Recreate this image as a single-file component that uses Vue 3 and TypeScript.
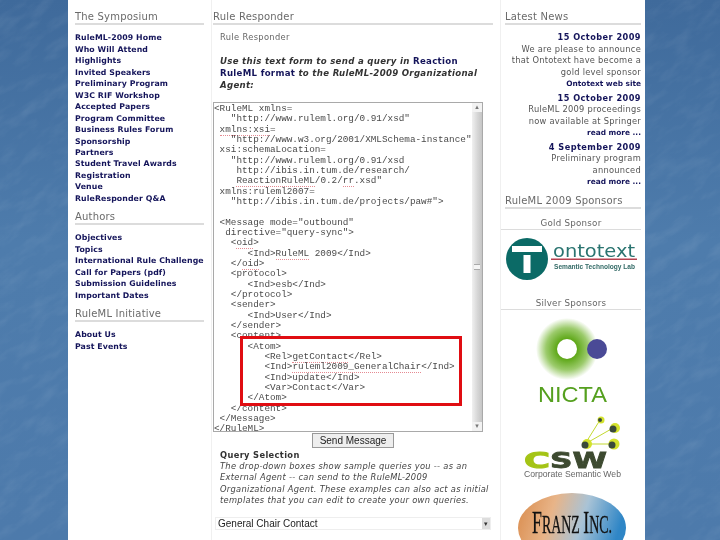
<script setup lang="ts">
interface NewsItem { date: string; lines: string[]; link: string }
interface Seg { t: string; err?: boolean }
const symposium: string[] = ['RuleML-2009 Home','Who Will Attend','Highlights','Invited Speakers','Preliminary Program','W3C RIF Workshop','Accepted Papers','Program Committee','Business Rules Forum','Sponsorship','Partners','Student Travel Awards','Registration','Venue','RuleResponder Q&A']
const authors: string[] = ['Objectives','Topics','International Rule Challenge','Call for Papers (pdf)','Submission Guidelines','Important Dates']
const initiative: string[] = ['About Us','Past Events']
const news: NewsItem[] = [
  { date: '15 October 2009', lines: ['We are please to announce','that Ontotext have become a','gold level sponsor'], link: 'Ontotext web site' },
  { date: '15 October 2009', lines: ['RuleML 2009 proceedings','now available at Springer'], link: 'read more ...' },
  { date: '4 September 2009', lines: ['Preliminary program','announced'], link: 'read more ...' }
]
const xml: Seg[] = [
  { t: `<RuleML xmlns=
   "http://www.ruleml.org/0.91/xsd"
 ` },
  { t: 'xmlns:xsi', err: true },
  { t: `=
   "http://www.w3.org/2001/XMLSchema-instance"
 xsi:schemaLocation=
   "http://www.ruleml.org/0.91/xsd
    http://ibis.in.tum.de/research/
    ` },
  { t: 'ReactionRuleML', err: true },
  { t: '/0.2/' },
  { t: 'rr', err: true },
  { t: `.xsd"
 xmlns:ruleml2007=
   "http://ibis.in.tum.de/projects/paw#">

 <Message mode="outbound"
  directive="query-sync">
   <` },
  { t: 'oid', err: true },
  { t: `>
      <Ind>` },
  { t: 'RuleML', err: true },
  { t: ` 2009</Ind>
   </` },
  { t: 'oid', err: true },
  { t: `>
   <protocol>
      <Ind>esb</Ind>
   </protocol>
   <sender>
      <Ind>User</Ind>
   </sender>
   <content>
      <Atom>
         <Rel>` },
  { t: 'getContact', err: true },
  { t: `</Rel>
         <Ind>` },
  { t: 'ruleml2009_GeneralChair', err: true },
  { t: `</Ind>
         <Ind>update</Ind>
         <Var>Contact</Var>
      </Atom>
   </content>
 </Message>
</RuleML>` }
]
</script>

<template>
  <div class="slide">
    <svg class="texture" width="720" height="540" aria-hidden="true">
      <filter id="sky" x="0" y="0" width="100%" height="100%">
        <feTurbulence type="fractalNoise" baseFrequency="0.035 0.09" numOctaves="4" seed="7" />
        <feColorMatrix type="matrix" values="0 0 0 0 1  0 0 0 0 1  0 0 0 0 1  1.1 0 0 0 -0.48" />
      </filter>
      <g transform="rotate(-35 360 270)">
        <rect x="-300" y="-300" width="1320" height="1140" filter="url(#sky)" opacity="0.14" />
      </g>
    </svg>

    <main class="page">
      <aside class="left">
        <h2 class="title">The Symposium</h2>
        <ul class="links">
          <li v-for="item in symposium" :key="item">{{ item }}</li>
        </ul>
        <h2 class="title">Authors</h2>
        <ul class="links">
          <li v-for="item in authors" :key="item">{{ item }}</li>
        </ul>
        <h2 class="title">RuleML Initiative</h2>
        <ul class="links">
          <li v-for="item in initiative" :key="item">{{ item }}</li>
        </ul>
      </aside>

      <section class="middle">
        <h2 class="title">Rule Responder</h2>
        <div class="inner">
          <p class="crumb">Rule Responder</p>
          <p class="intro">Use this text form to send a query in <b>Reaction RuleML format</b> to the <span>RuleML-2009 Organizational</span> Agent:</p>
        </div>
        <div class="textarea">
          <pre class="code"><template v-for="(s, i) in xml" :key="i"><span v-if="s.err" class="err">{{ s.t }}</span><template v-else>{{ s.t }}</template></template></pre>
          <div class="scrollbar">
            <span class="arrow">▴</span>
            <span class="thumb"><i class="grip"></i></span>
            <span class="arrow">▾</span>
          </div>
          <div class="highlight"></div>
        </div>
        <div class="send"><button type="button">Send Message</button></div>
        <div class="inner">
          <h3 class="query">Query Selection</h3>
          <p class="help">The drop-down boxes show sample queries you -- as an External Agent -- can send to the RuleML-2009 Organizational Agent. These examples can also act as initial templates that you can edit to create your own queries.</p>
        </div>
        <div class="select">
          <span>General Chair Contact</span>
          <span class="drop">▾</span>
        </div>
      </section>

      <aside class="right">
        <h2 class="title">Latest News</h2>
        <div v-for="(n, i) in news" :key="i" class="news">
          <div class="date">{{ n.date }}</div>
          <div v-for="l in n.lines" :key="l" class="line">{{ l }}</div>
          <div class="more">{{ n.link }}</div>
        </div>
        <h2 class="title sponsors">RuleML 2009 Sponsors</h2>
        <h3 class="tier gold">Gold Sponsor</h3>
        <svg class="logo ontotext" width="140" height="46" viewBox="0 0 140 46">
          <circle cx="26" cy="23" r="21" fill="#0b6a66" />
          <rect x="11" y="10" width="30" height="6" fill="#fff" />
          <rect x="22.500" y="19" width="7" height="18" fill="#fff" />
          <text x="52" y="20.500" class="onto" textLength="82" lengthAdjust="spacingAndGlyphs">ontotext</text>
          <rect x="50" y="22.500" width="86" height="1.500" fill="#b5404f" />
          <text x="53" y="32.500" class="lab" textLength="81" lengthAdjust="spacingAndGlyphs">Semantic Technology Lab</text>
        </svg>
        <h3 class="tier silver">Silver Sponsors</h3>
        <svg class="logo" width="140" height="102" viewBox="0 0 140 102">
          <defs>
            <radialGradient id="glow">
              <stop offset="0.3" stop-color="#5aa512" />
              <stop offset="0.68" stop-color="#9ccb6c" />
              <stop offset="1" stop-color="#fff" />
            </radialGradient>
          </defs>
          <circle cx="66" cy="39" r="31" fill="url(#glow)" />
          <circle cx="66" cy="39" r="10" fill="#fff" />
          <circle cx="96" cy="39" r="10" fill="#4a4a96" />
          <text x="37" y="92" class="nicta" textLength="69" lengthAdjust="spacingAndGlyphs">NICTA</text>
        </svg>
        <svg class="logo csw" width="140" height="80" viewBox="0 0 140 80">
          <g stroke="#c3d92f" stroke-width="1" fill="none">
            <path d="M84 32 L99 8 M84 32 L112 16 M84 32 L111 32" />
          </g>
          <g fill="#d3e22c">
            <circle cx="86" cy="32" r="5" /><circle cx="114" cy="16" r="5" /><circle cx="113" cy="32" r="5.500" /><circle cx="100" cy="8" r="3.500" />
          </g>
          <g fill="#3a4a3a">
            <circle cx="84" cy="33" r="3.500" /><circle cx="112" cy="17" r="3.500" /><circle cx="111" cy="33" r="3.500" /><circle cx="99" cy="8" r="2" />
          </g>
          <text x="23" y="56" class="cswc" textLength="26" lengthAdjust="spacingAndGlyphs">C</text>
          <text x="49" y="56" class="csws" textLength="57" lengthAdjust="spacingAndGlyphs">SW</text>
          <text x="23" y="65" class="cswt" textLength="97" lengthAdjust="spacingAndGlyphs">Corporate Semantic Web</text>
        </svg>
        <svg class="logo franz" width="140" height="60" viewBox="0 0 140 60">
          <defs>
            <linearGradient id="globe" x1="0" x2="1" y1="0" y2="0.2">
              <stop offset="0" stop-color="#d98a4a" />
              <stop offset="0.35" stop-color="#e8b488" />
              <stop offset="0.65" stop-color="#a9c3d6" />
              <stop offset="1" stop-color="#2f86c6" />
            </linearGradient>
          </defs>
          <ellipse cx="71" cy="36" rx="54" ry="35" fill="url(#globe)" />
          <text x="31" y="41" class="fr" textLength="80" lengthAdjust="spacingAndGlyphs">F<tspan class="fr-s">RANZ </tspan>I<tspan class="fr-s">NC.</tspan></text>
        </svg>
      </aside>
    </main>
  </div>
</template>

<style>
html, body { margin: 0; height: 100%; overflow: hidden; }
</style>

<style scoped>
.slide {
  position: relative;
  width: 720px;
  height: 540px;
  overflow: hidden;
  background: linear-gradient(180deg, #3f6a9b 0%, #4e7cac 45%, #4d7aab 100%);
}
.texture { position: absolute; inset: 0; }
.page {
  position: relative;
  margin-left: 68px;
  width: 577px;
  height: 540px;
  overflow: hidden;
  background: #fff;
  display: grid;
  grid-template-columns: 144px 289px 144px;
  font-family: "DejaVu Sans", sans-serif;
  filter: blur(0.35px);
}
.title {
  margin: 0;
  font-size: 10px;
  line-height: 12px;
  font-weight: 400;
  color: #6a6a6a;
  letter-spacing: 0.2px;
  border-bottom: 2.5px solid #dcdcdc;
}
.left { padding: 11px 7px 0 7px; border-right: 1px solid #f0f0f0; }
.links { list-style: none; margin: 7.300px 0 6.700px; padding: 0; }
.links li {
  font-size: 7.8px;
  line-height: 11.47px;
  font-weight: 700;
  letter-spacing: 0.1px;
  color: #14145a;
  white-space: nowrap;
}
.middle { padding: 11px 7px 0 1px; border-right: 1px solid #f0f0f0; box-sizing: border-box; }
.inner { padding-left: 7px; }
.crumb { margin: 7px 0 0; font-size: 8.3px; line-height: 11px; color: #666; letter-spacing: 0.35px; }
.intro { margin: 12px 0 0; font-size: 8.6px; line-height: 12px; font-weight: 700; font-style: italic; color: #333; letter-spacing: 0.3px; width: 262px; }
.intro b { font-style: normal; color: #14145a; }
.textarea {
  position: relative;
  width: 270px;
  height: 330px;
  margin-top: 11px;
  box-sizing: border-box;
  border: 1px solid #a9a9a9;
  background: #fff;
  display: flex;
  overflow: hidden;
}
.code {
  flex: 1;
  margin: 0;
  padding: 1px 0 0 0;
  font-family: "Liberation Mono", monospace;
  font-size: 9.33px;
  line-height: 10.33px;
  color: #4a4a4a;
  overflow: hidden;
}
.err { border-bottom: 1px dotted #e58a92; }
.scrollbar {
  width: 10px;
  background: linear-gradient(90deg, #f0f0f0 0%, #d4d4d4 60%, #c6c6c6 100%);
  display: flex;
  flex-direction: column;
  align-items: center;
}
.arrow { width: 10px; height: 9px; background: #f2f2f2; color: #777; font-size: 7px; line-height: 9px; text-align: center; }
.thumb { flex: 1; width: 10px; display: flex; justify-content: center; align-items: center; }
.grip { width: 6px; height: 4px; background: #f4f4f4; border-top: 1px solid #aaa; border-bottom: 1px solid #aaa; }
.highlight {
  position: absolute;
  left: 26px;
  top: 233px;
  width: 216px;
  height: 64px;
  border: 3.5px solid #e00d12;
}
.send { display: flex; justify-content: flex-start; padding-left: 99px; height: 16px; margin-top: 1px; }
.send button {
  width: 82px;
  height: 15px;
  padding: 0;
  border: 1px solid #999;
  background: #eeeeee;
  font-family: "Liberation Sans", sans-serif;
  font-size: 10px;
  line-height: 13px;
  color: #222;
}
.query { margin: 1px 0 0; font-size: 8.3px; line-height: 11px; font-weight: 700; letter-spacing: 0.35px; color: #333; }
.help { margin: 0; font-size: 8.3px; line-height: 11.4px; font-style: italic; letter-spacing: 0.3px; color: #444; width: 272px; }
.select {
  margin: 10px 0 0 2px;
  width: 276px;
  height: 13px;
  box-sizing: border-box;
  border: 1px solid #eee;
  display: flex;
  justify-content: space-between;
  align-items: center;
  padding-left: 2px;
  font-family: "Liberation Sans", sans-serif;
  font-size: 10px;
  color: #222;
}
.drop { width: 8px; height: 11px; background: #ddd; font-size: 7px; line-height: 11px; text-align: center; color: #333; }
.right { padding: 11px 4px 0 0; }
.right > .title { margin-left: 4px; }
.news { text-align: right; }
.news:first-of-type { margin-top: 7px; }
.date { font-size: 8.2px; line-height: 11.5px; font-weight: 700; letter-spacing: 0.45px; color: #14145a; }
.line { font-size: 8.3px; line-height: 11.5px; color: #555; letter-spacing: 0.25px; white-space: nowrap; }
.more { font-size: 7.4px; line-height: 12px; font-weight: 700; color: #14145a; margin-bottom: 2.500px; }
.right > .sponsors { margin-top: 7px; border-bottom-width: 2px; }
.tier {
  margin: 9px 0 0;
  font-size: 8.7px;
  line-height: 11px;
  font-weight: 400;
  color: #666;
  text-align: center;
  letter-spacing: 0.25px;
  border-bottom: 1.500px solid #dcdcdc;
}
.logo { display: block; }
.ontotext { margin-top: 6px; }
.tier.silver { margin-top: 15.500px; }
.onto { font-family: "DejaVu Sans", sans-serif; font-size: 17px; fill: #2a7470; }
.lab { font-family: "Liberation Sans", sans-serif; font-size: 7px; fill: #336a66; font-weight: 700; }
.nicta { font-family: "Liberation Sans", sans-serif; font-size: 22px; fill: #55a01f; }
.cswc { font-family: "DejaVu Sans", sans-serif; font-weight: 700; font-size: 22px; fill: #a4c416; stroke: #a4c416; stroke-width: 1px; }
.csws { font-family: "DejaVu Sans", sans-serif; font-weight: 700; font-size: 22px; fill: #3d4a30; stroke: #3d4a30; stroke-width: 0.8px; }
.cswt { font-family: "Liberation Sans", sans-serif; font-size: 8.4px; fill: #666; }
.fr { font-family: "Liberation Serif", serif; font-size: 32px; fill: #111; stroke: #111; stroke-width: 0.3px; }
.fr-s { font-size: 25px; }
</style>
